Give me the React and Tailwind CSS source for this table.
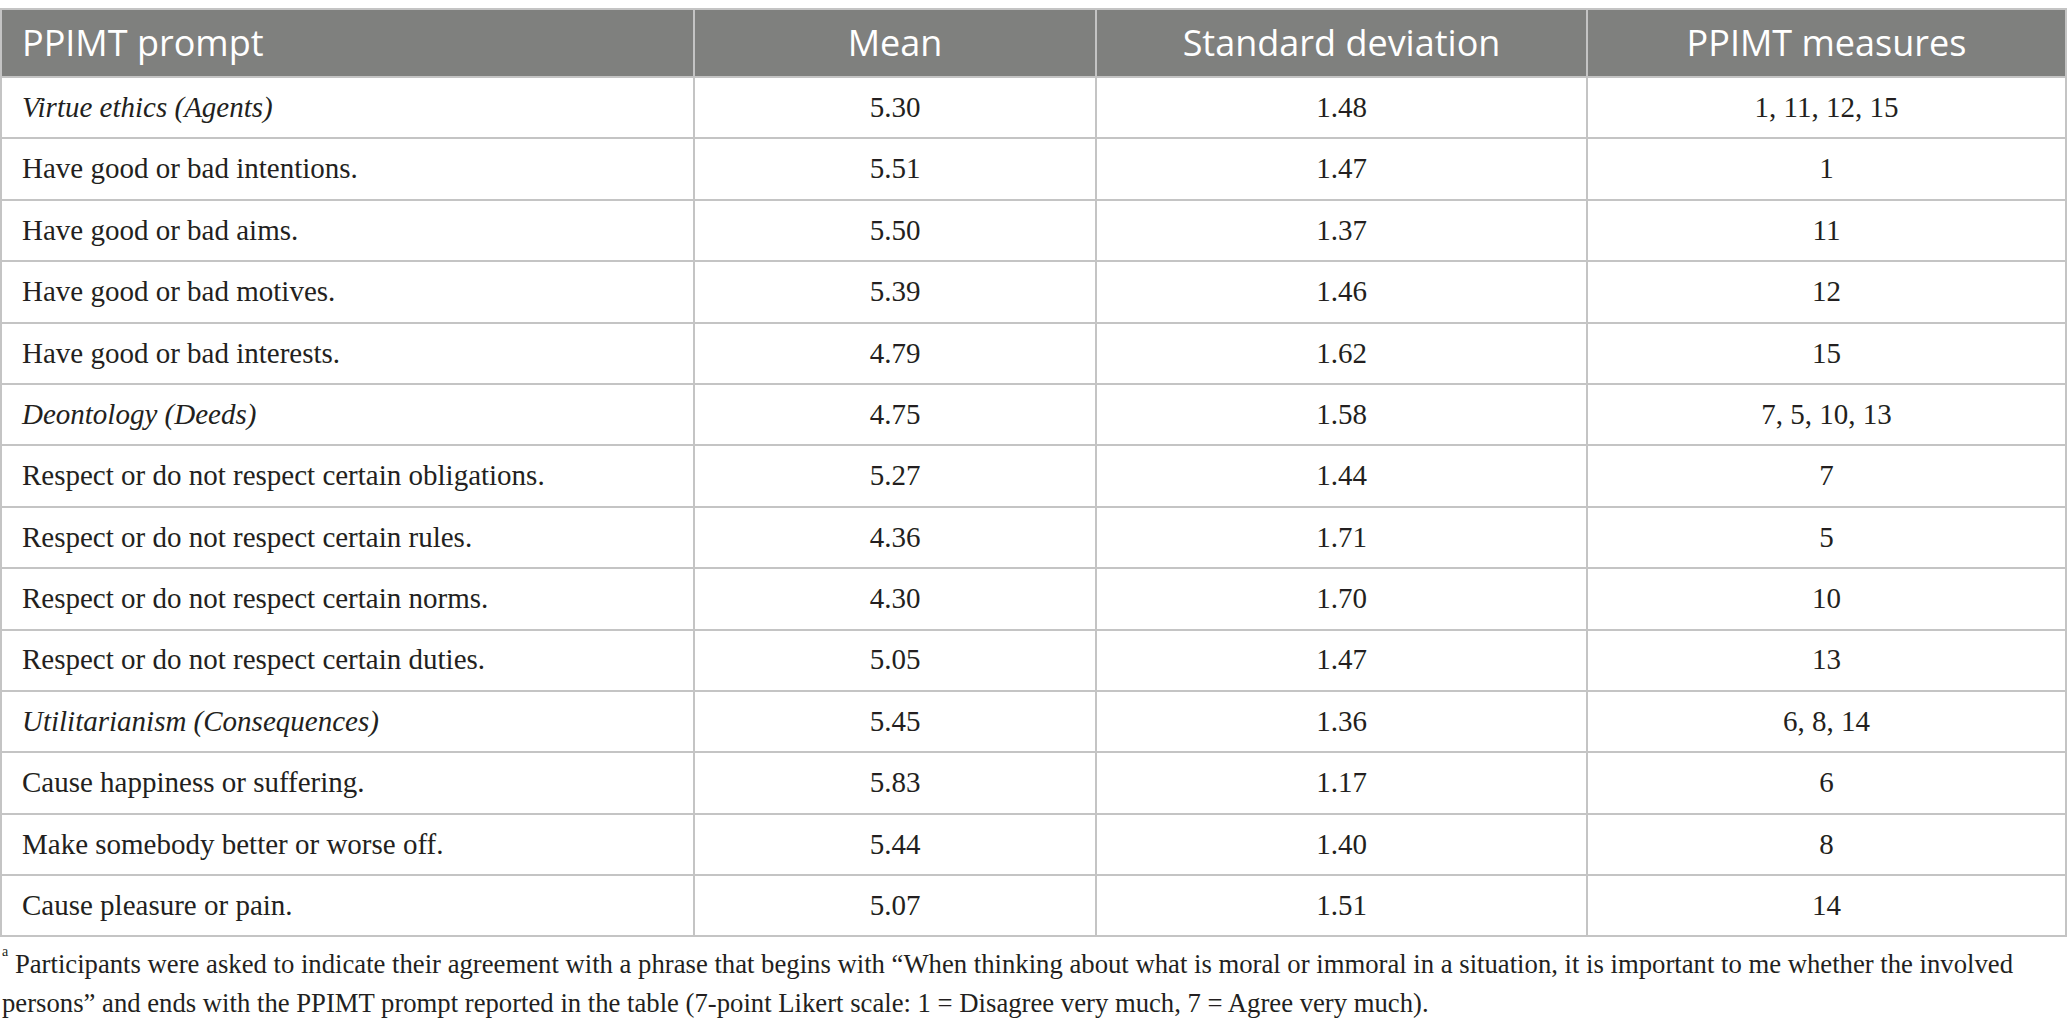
const rows = [
  { label: 'Virtue ethics (Agents)', mean: '5.30', sd: '1.48', measures: '1, 11, 12, 15', group: true },
  { label: 'Have good or bad intentions.', mean: '5.51', sd: '1.47', measures: '1' },
  { label: 'Have good or bad aims.', mean: '5.50', sd: '1.37', measures: '11' },
  { label: 'Have good or bad motives.', mean: '5.39', sd: '1.46', measures: '12' },
  { label: 'Have good or bad interests.', mean: '4.79', sd: '1.62', measures: '15' },
  { label: 'Deontology (Deeds)', mean: '4.75', sd: '1.58', measures: '7, 5, 10, 13', group: true },
  { label: 'Respect or do not respect certain obligations.', mean: '5.27', sd: '1.44', measures: '7' },
  { label: 'Respect or do not respect certain rules.', mean: '4.36', sd: '1.71', measures: '5' },
  { label: 'Respect or do not respect certain norms.', mean: '4.30', sd: '1.70', measures: '10' },
  { label: 'Respect or do not respect certain duties.', mean: '5.05', sd: '1.47', measures: '13' },
  { label: 'Utilitarianism (Consequences)', mean: '5.45', sd: '1.36', measures: '6, 8, 14', group: true },
  { label: 'Cause happiness or suffering.', mean: '5.83', sd: '1.17', measures: '6' },
  { label: 'Make somebody better or worse off.', mean: '5.44', sd: '1.40', measures: '8' },
  { label: 'Cause pleasure or pain.', mean: '5.07', sd: '1.51', measures: '14' },
];

const serif = "font-['Liberation_Serif','Times_New_Roman',serif]";

export default function App() {
  return (
    <div className="min-h-screen bg-white pt-2 text-[#231f20]">
      <table className="w-full border-collapse table-fixed">
        <colgroup>
          <col className="w-[693px]" />
          <col className="w-[402px]" />
          <col className="w-[491px]" />
          <col />
        </colgroup>
        <thead>
          <tr className="h-[68px] bg-[#7f807e] text-white font-['Open_Sans','Noto_Sans',sans-serif] text-[36px] font-normal">
            <th className="border-2 border-[#c4c4c4] px-5 text-left font-normal">PPIMT prompt</th>
            <th className="border-2 border-[#c4c4c4] text-center font-normal">Mean</th>
            <th className="border-2 border-[#c4c4c4] text-center font-normal">Standard deviation</th>
            <th className="border-2 border-[#c4c4c4] text-center font-normal">PPIMT measures</th>
          </tr>
        </thead>
        <tbody className={`${serif} text-[29px]`}>
          {rows.map((r) => (
            <tr key={r.label} className="h-[61.4px]">
              <td className={`border-2 border-[#c4c4c4] px-5 ${r.group ? 'italic' : ''}`}>{r.label}</td>
              <td className="border-2 border-[#c4c4c4] text-center">{r.mean}</td>
              <td className="border-2 border-[#c4c4c4] text-center">{r.sd}</td>
              <td className="border-2 border-[#c4c4c4] text-center">{r.measures}</td>
            </tr>
          ))}
        </tbody>
      </table>
      <div className={`${serif} text-[26.7px] leading-[39px] pt-2 pl-[2px]`}>
        <p>
          <sup className="text-[14px] align-[10px]">a</sup> Participants were asked to indicate their agreement with a phrase that begins with “When thinking about what is moral or immoral in a situation, it is important to me whether the involved
          <br />
          persons” and ends with the PPIMT prompt reported in the table (7-point Likert scale: 1 = Disagree very much, 7 = Agree very much).
        </p>
      </div>
    </div>
  );
}
